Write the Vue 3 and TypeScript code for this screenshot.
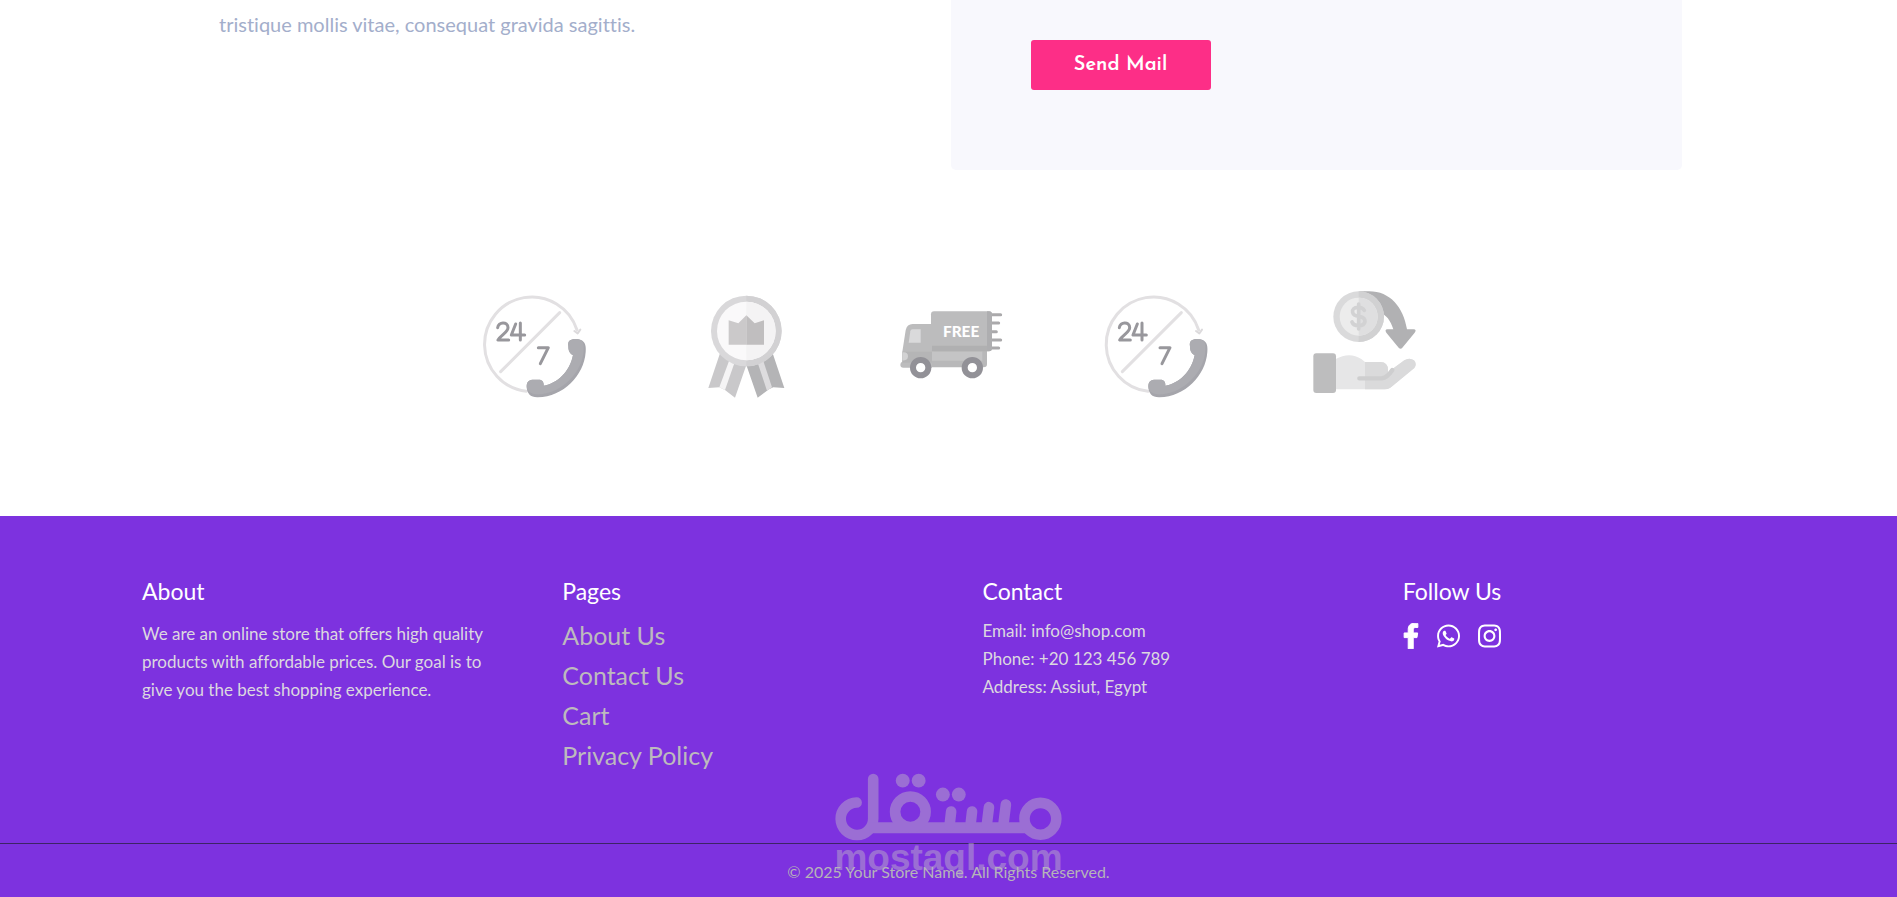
<script setup lang="ts">
interface Feature {
  kind: 'support' | 'quality' | 'delivery' | 'cashback'
  label: string
  viewBox: string
}

const features: Feature[] = [
  { kind: 'support', label: '24/7 support', viewBox: '32 30 312 336' },
  { kind: 'quality', label: 'Quality award', viewBox: '-4 30 312 336' },
  { kind: 'delivery', label: 'Free delivery', viewBox: '20 0 312 336' },
  { kind: 'support', label: '24/7 support', viewBox: '39 30 312 336' },
  { kind: 'cashback', label: 'Cash back', viewBox: '38 30 312 336' },
]

const pages: string[] = ['About Us', 'Contact Us', 'Cart', 'Privacy Policy']
</script>

<template>
  <div class="page">
    <main>
      <section class="contact">
        <p class="intro">tristique mollis vitae, consequat gravida sagittis.</p>
        <form class="panel" @submit.prevent>
          <button type="submit" class="send">Send Mail</button>
        </form>
      </section>

      <section class="features" aria-label="Store features">
        <svg
          v-for="(feature, i) in features"
          :key="i"
          class="feature"
          :viewBox="feature.viewBox"
          role="img"
          :aria-label="feature.label"
        >
          <g v-if="feature.kind === 'support'" fill="none" stroke-linecap="round" stroke-linejoin="round">
            <path d="M168 334A142 142 0 1 1 320 150" stroke="#e2e0e2" stroke-width="9" />
            <path d="M312 153L322 160L330 149" stroke="#dcdadc" stroke-width="6" />
            <path d="M91 275L268 98" stroke="#e2e0e2" stroke-width="9" />
            <g stroke="#98979c" stroke-width="9">
              <path d="M82 143C84 125 112 123 113 143C113 157 92 164 83 180H115" />
              <path d="M136 132L123 165H163M150 129V180" />
              <path d="M204 203H234L210 251" />
            </g>
            <path
              d="M294 198C290 180 306 175 324 178C342 181 348 193 346 216C341 287 279 350 203 352C181 353 169 341 169 319C169 304 177 299 191 299H205C217 299 221 307 220 317C260 311 299 275 308 225C300 222 294 214 294 198Z"
              fill="#a5a5ab"
            />
            <path d="M294 200C290 180 306 175 324 178C337 181 342 190 340 211C337 275 278 336 212 343C183 346 169 335 169 319C169 304 177 299 191 299H205C217 299 221 307 220 317C260 311 299 275 308 225C300 222 294 214 294 200Z" fill="#acacb1" />
          </g>

          <g v-else-if="feature.kind === 'quality'">
            <path d="M89 220L54 324L87 322L104 330L134 353L168 255Z" fill="#c9c8ca" />
            <path d="M118 238L87 322L104 330L132 250Z" fill="#f5f4f5" />
            <path d="M247 220L282 324L249 322L236 328L202 353L168 255Z" fill="#b4b4b6" />
            <path d="M202 248L230 332L245 322L218 240Z" fill="#dddcde" />
            <circle cx="168" cy="153" r="106" fill="#d9d8da" />
            <path d="M168 47A106 106 0 0 1 168 259Z" fill="#d2d1d3" />
            <circle cx="168" cy="153" r="88" fill="#faf9fa" />
            <path d="M168 65A88 88 0 0 1 168 241Z" fill="#f4f3f4" />
            <path d="M115 194V121L144 130L168 106V194Z" fill="#cbc9ca" />
            <path d="M221 194V121L193 130L168 106V194Z" fill="#c0bebf" />
          </g>

          <g v-else-if="feature.kind === 'delivery'">
            <g fill="none" stroke="#aaa9ab" stroke-width="9" stroke-linecap="round">
              <path d="M300 74H331M300 99H325M300 125H318M300 150H331M300 174H325" />
            </g>
            <path d="M120 170H290V222Q290 232 280 232H120Z" fill="#b8b8b9" />
            <path d="M124 184H276V212H124Z" fill="#c4c4c5" />
            <path d="M125 102H67Q50 102 46 121L36 185V215Q30 217 30 224Q30 233 39 233H125Z" fill="#bcbcbd" />
            <path d="M36 185H125V218H36Z" fill="#b5b5b6" />
            <path d="M36 187Q53 185 53 199T36 211Z" fill="#d2d2d3" />
            <path d="M66 118H91V158H55L60 124Q61 118 66 118Z" fill="#dadadb" />
            <rect x="122" y="64" width="183" height="120" rx="9" fill="#bcbcbd" />
            <path d="M290 64H296Q305 64 305 73V175Q305 184 296 184H290Z" fill="#aeaeb0" />
            <path d="M125 167H290V184H125Z" fill="#b0b0b1" />
            <text x="158" y="142" class="free">FREE</text>
            <g fill="#fff" stroke="#929197" stroke-width="18">
              <circle cx="91" cy="233" r="23" />
              <circle cx="246" cy="233" r="23" />
            </g>
          </g>

          <g v-else>
            <path d="M176 34H206C270 34 309 82 320 148H340Q350 149 343 158L306 203Q301 209 295 203L258 158Q252 149 261 148H279C271 121 257 103 238 98Z" fill="#b1b1b3" />
            <circle cx="175" cy="110" r="76" fill="#dadadb" />
            <path d="M175 34A76 76 0 0 1 175 186Z" fill="#d1d1d2" />
            <circle cx="175" cy="110" r="57" fill="#ececec" />
            <path d="M175 53A57 57 0 0 1 175 167Z" fill="#dfdfe0" />
            <path d="M192 91Q187 82 174 82Q154 83 157 97Q159 107 176 109Q195 112 194 125Q192 137 175 137Q159 137 155 126M175 72V147" fill="none" stroke="#d2d2d3" stroke-width="11" stroke-linecap="round" />
            <path d="M106 237Q148 214 183 237L194 246H241Q263 247 263 270V277L312 241Q327 231 341 241Q351 253 342 264L270 323Q263 328 252 328H106Z" fill="#e6e6e7" />
            <path d="M194 246H241Q263 247 263 270V277L312 241Q327 231 341 241Q351 253 342 264L270 323Q263 328 252 328H194Z" fill="#dadadb" />
            <path d="M177 295H244Q261 293 276 270" fill="none" stroke="#cececf" stroke-width="13" stroke-linecap="round" />
            <rect x="39" y="220" width="68" height="119" rx="9" fill="#bdbdbe" />
          </g>
        </svg>
      </section>
    </main>

    <footer class="footer">
      <div class="columns">
        <section>
          <h2>About</h2>
          <p class="about">
            We are an online store that offers high quality products with affordable prices. Our goal is to give you
            the best shopping experience.
          </p>
        </section>
        <section>
          <h2>Pages</h2>
          <ul class="pages">
            <li v-for="page in pages" :key="page"><a href="#">{{ page }}</a></li>
          </ul>
        </section>
        <section>
          <h2>Contact</h2>
          <address>
            <p>Email: info@shop.com</p>
            <p>Phone: +20 123 456 789</p>
            <p>Address: Assiut, Egypt</p>
          </address>
        </section>
        <section>
          <h2>Follow Us</h2>
          <div class="social">
            <a href="#" aria-label="Facebook">
              <svg class="fb" viewBox="0 0 320 512" fill="currentColor" stroke="currentColor" stroke-width="20">
                <path d="M279.14 288l14.22-92.66h-88.91v-60.13c0-25.35 12.42-50.06 52.24-50.06h40.42V6.26S260.43 0 225.36 0c-73.22 0-121.08 44.38-121.08 124.72v70.62H22.89V288h81.39v224h100.17V288z" />
              </svg>
            </a>
            <a href="#" aria-label="WhatsApp">
              <svg viewBox="0 32 448 448" fill="currentColor">
                <path d="M380.9 97.1C339 55.1 283.2 32 223.9 32c-122.4 0-222 99.6-222 222 0 39.1 10.2 77.3 29.6 111L0 480l117.7-30.9c32.4 17.7 68.9 27 106.1 27h.1c122.3 0 224.1-99.6 224.1-222 0-59.3-25.2-115-67.1-157zm-157 341.6c-33.2 0-65.7-8.9-94-25.7l-6.7-4-69.8 18.3L72 359.2l-4.4-7c-18.5-29.4-28.2-63.3-28.2-98.2 0-101.7 82.8-184.5 184.6-184.5 49.3 0 95.6 19.2 130.4 54.1 34.8 34.9 56.2 81.2 56.1 130.5 0 101.8-84.9 184.6-186.6 184.6zm101.2-138.2c-5.5-2.8-32.8-16.2-37.9-18-5.1-1.9-8.8-2.8-12.5 2.8-3.7 5.6-14.3 18-17.6 21.8-3.2 3.7-6.5 4.2-12 1.4-32.6-16.3-54-29.1-75.5-66-5.7-9.8 5.7-9.1 16.3-30.3 1.8-3.7.9-6.9-.5-9.7-1.4-2.8-12.5-30.1-17.1-41.2-4.5-10.8-9.1-9.3-12.5-9.5-3.2-.2-6.9-.2-10.6-.2-3.7 0-9.7 1.4-14.8 6.9-5.1 5.6-19.4 19-19.4 46.3 0 27.3 19.9 53.7 22.6 57.4 2.8 3.7 39.1 59.7 94.8 83.8 35.2 15.2 49 16.5 66.6 13.9 10.7-1.6 32.8-13.4 37.4-26.4 4.6-13 4.6-24.1 3.2-26.4-1.3-2.5-5-3.9-10.5-6.6z" />
              </svg>
            </a>
            <a href="#" aria-label="Instagram">
              <svg viewBox="0 32 448 448" fill="currentColor">
                <path d="M224.1 141c-63.6 0-114.9 51.3-114.9 114.9s51.3 114.9 114.9 114.9S339 319.5 339 255.9 287.7 141 224.1 141zm0 189.6c-41.1 0-74.7-33.5-74.7-74.7s33.5-74.7 74.7-74.7 74.7 33.5 74.7 74.7-33.6 74.7-74.7 74.7zm146.4-194.3c0 14.9-12 26.8-26.8 26.8-14.9 0-26.8-12-26.8-26.8s12-26.8 26.8-26.8 26.8 12 26.8 26.8zm76.1 27.2c-1.7-35.9-9.9-67.7-36.2-93.9-26.2-26.2-58-34.4-93.9-36.2-37-2.1-147.9-2.1-184.9 0-35.8 1.7-67.6 9.9-93.9 36.1s-34.4 58-36.2 93.9c-2.1 37-2.1 147.9 0 184.9 1.7 35.9 9.9 67.7 36.2 93.9s58 34.4 93.9 36.2c37 2.1 147.9 2.1 184.9 0 35.9-1.7 67.7-9.9 93.9-36.2 26.2-26.2 34.4-58 36.2-93.9 2.1-37 2.1-147.8 0-184.8zM398.8 388c-7.8 19.6-22.9 34.7-42.6 42.6-29.5 11.7-99.5 9-132.1 9s-102.7 2.6-132.1-9c-19.6-7.8-34.7-22.9-42.6-42.6-11.7-29.5-9-99.5-9-132.1s-2.6-102.7 9-132.1c7.8-19.6 22.9-34.7 42.6-42.6 29.5-11.7 99.5-9 132.1-9s102.7-2.6 132.1 9c19.6 7.8 34.7 22.9 42.6 42.6 11.7 29.5 9 99.5 9 132.1s2.7 102.7-9 132.1z" />
              </svg>
            </a>
          </div>
        </section>
      </div>

      <p class="copyright">© 2025 Your Store Name. All Rights Reserved.</p>

      <div class="watermark">
        <svg viewBox="190 40 688 205" role="img" aria-label="مستقل">
          <g fill="none" stroke="currentColor" stroke-width="32" stroke-linecap="round">
            <path d="M257 129A49 49 0 1 0 307 178V58" />
            <path d="M296 205H775" stroke-width="33" stroke-linecap="butt" />
            <circle cx="419" cy="157" r="46" />
            <circle cx="811" cy="178" r="48" />
            <path d="M542 156L537 200M605 156L600 200M656 143L649 200M707 135L699 200" />
          </g>
          <g fill="currentColor">
            <circle cx="396" cy="63" r="21" />
            <circle cx="444" cy="63" r="21" />
            <circle cx="517" cy="105" r="21" />
            <circle cx="565" cy="105" r="21" />
          </g>
        </svg>
        <span>mostaql.com</span>
      </div>
    </footer>
  </div>
</template>

<style>
body {
  margin: 0;
  background: #fff;
}
</style>

<style scoped>
.page {
  min-height: 100vh;
  display: flex;
  flex-direction: column;
  font-family: Lato, 'Liberation Sans', sans-serif;
  font-variant-ligatures: none;
}

p,
h2,
ul {
  margin: 0;
  padding: 0;
}

.contact {
  display: grid;
  grid-template-columns: 1fr 1fr;
  padding: 0 215px 0 219px;
}

.intro {
  padding-top: 9px;
  font-size: 20px;
  line-height: 30px;
  color: #a3aecb;
}

.panel {
  padding: 40px 80px 80px;
  background: #f8f8fd;
  border-radius: 0 0 5px 5px;
}

.send {
  display: block;
  width: 180px;
  height: 50px;
  padding: 0;
  border: 0;
  border-radius: 3px;
  background: #fd2e87;
  color: #fff;
  font: 600 20px 'Josefin Sans', Lato, sans-serif;
}

.features {
  display: flex;
  justify-content: center;
  gap: 104px;
  padding: 120px 0 114px;
}

.feature {
  width: 104px;
  height: 112px;
  overflow: visible;
}

.free {
  font: 900 46px Lato, sans-serif;
  fill: #fff;
}

.footer {
  position: relative;
  flex: 1;
  background: #7d32df;
  color: #fff;
}

.columns {
  display: grid;
  grid-template-columns: repeat(4, 1fr);
  gap: 68px;
  padding: 59px 142px 66px;
}

h2 {
  margin-bottom: 10px;
  font-size: 23px;
  font-weight: 400;
  line-height: 32px;
}

.about,
address {
  font-size: 17px;
  font-style: normal;
  line-height: 28px;
  color: #dcd8df;
}

.about {
  padding-top: 3px;
}

.pages {
  list-style: none;
}

.pages li {
  height: 40px;
  font-size: 25px;
  line-height: 36px;
}

.pages a {
  color: #bdbabd;
  text-decoration: none;
}

.social {
  display: flex;
  align-items: center;
  gap: 18px;
  padding-top: 6px;
}

.social a {
  display: flex;
  color: #fff;
}

.social svg {
  width: 23px;
  height: 26px;
}

.social .fb {
  width: 16px;
}

.copyright {
  border-top: 1px solid #3c2465;
  padding: 15px 0 12px;
  font-size: 16px;
  line-height: 25px;
  text-align: center;
  color: #b6b4b8;
}

.watermark {
  position: absolute;
  bottom: 22px;
  left: 0;
  right: 0;
  display: flex;
  flex-direction: column;
  align-items: center;
  color: #b9aacb;
  opacity: 0.5;
  pointer-events: none;
}

.watermark svg {
  width: 229px;
  height: 68px;
}

.watermark span {
  font: 700 37px/34px 'Liberation Sans', Arial, sans-serif;
}
</style>
